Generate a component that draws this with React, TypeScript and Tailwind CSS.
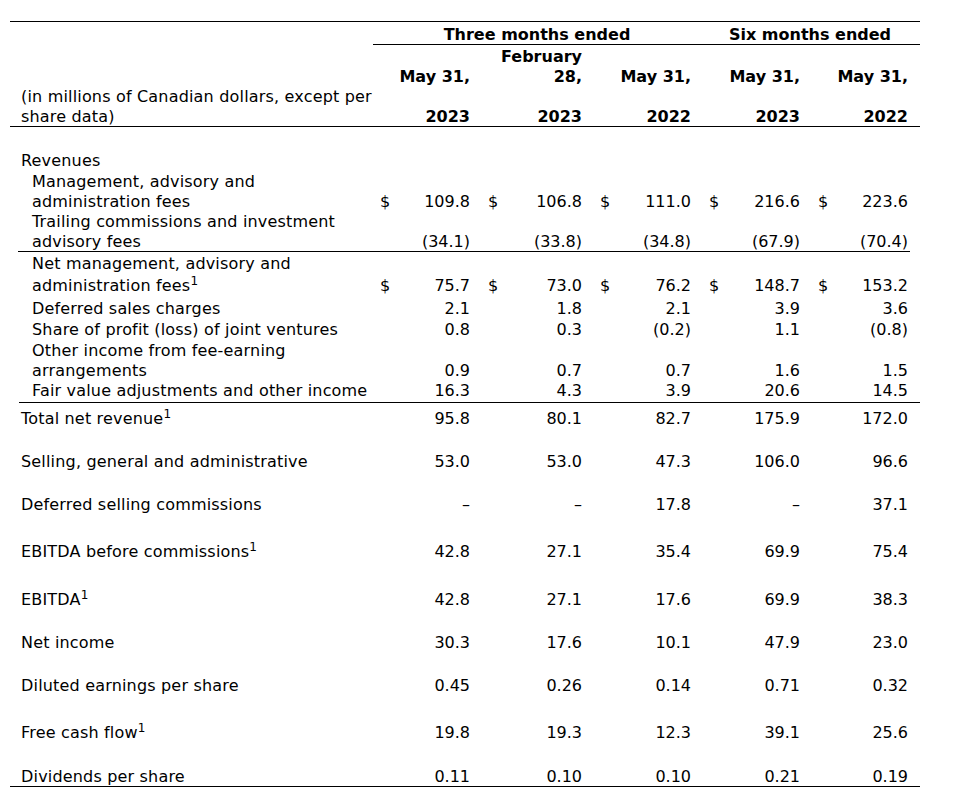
import { Fragment, ReactNode } from "react";

// column template: spacer | label | 5 x ($, value) | spacer
const cols =
  "grid grid-cols-[8px_355px_23px_76px_32px_80px_32px_77px_33px_76px_32px_76px_10px] items-end";

type RowProps = {
  label: ReactNode;
  vals: string[];
  dollar?: boolean;
  sub?: boolean;
  cls: string;
};

const Row = ({ label, vals, dollar, sub, cls }: RowProps) => (
  <div className={`${cols} translate-y-px ${cls}`}>
    <div />
    <div className={sub ? "pl-[14px] tracking-[0.18px]" : "pl-[3px] tracking-[0.18px]"}>{label}</div>
    {vals.map((v, i) => (
      <Fragment key={i}>
        <div className={i === 0 ? "pl-[7px]" : "pl-[16px]"}>{dollar ? "$" : ""}</div>
        <div className="text-right pr-[2px]">{v}</div>
      </Fragment>
    ))}
    <div />
  </div>
);

const Line = ({ cls }: { cls: string }) => <div className={`h-px bg-black ${cls}`} />;

const Sup = () => <sup>1</sup>;

const dash = "\u2013";

export default function App() {
  return (
    <div className="w-[957px] h-[801px] bg-white pt-[21px] pl-[10px] font-['DejaVu_Sans',Verdana,sans-serif] text-[16px] leading-[20px] text-black">
      <div className="w-[910px]">
        <Line cls="" />

        {/* group headers */}
        <div className={`${cols} h-[22px] font-bold translate-y-px`}>
          <div className="col-span-2" />
          <div className="col-span-6 text-center pl-[8px]">Three months ended</div>
          <div className="col-span-5 text-center pl-[7px]">Six months ended</div>
        </div>
        <Line cls="ml-[363px]" />

        {/* period headers */}
        <div className={`${cols} h-[81px] translate-y-px`}>
          <div className="col-span-2 pl-[11px] tracking-[0.18px]">
            (in millions of Canadian dollars, except per
            <br />
            share data)
          </div>
          <div className="col-span-2 text-right pr-[2px] font-bold">
            May 31,
            <br />
            <br />
            2023
          </div>
          <div className="col-span-2 text-right pr-[2px] font-bold">
            February
            <br />
            28,
            <br />
            <br />
            2023
          </div>
          <div className="col-span-2 text-right pr-[2px] font-bold">
            May 31,
            <br />
            <br />
            2022
          </div>
          <div className="col-span-2 text-right pr-[2px] font-bold">
            May 31,
            <br />
            <br />
            2023
          </div>
          <div className="col-span-2 text-right pr-[2px] font-bold">
            May 31,
            <br />
            <br />
            2022
          </div>
          <div />
        </div>
        <Line cls="" />

        <div className="h-[23px]" />
        <Row label="Revenues" vals={["", "", "", "", ""]} cls="h-[20px]" />
        <Row
          sub
          dollar
          label={
            <>
              Management, advisory and
              <br />
              administration fees
            </>
          }
          vals={["109.8", "106.8", "111.0", "216.6", "223.6"]}
          cls="h-[41px]"
        />
        <Row
          sub
          label={
            <>
              Trailing commissions and investment
              <br />
              advisory fees
            </>
          }
          vals={["(34.1)", "(33.8)", "(34.8)", "(67.9)", "(70.4)"]}
          cls="h-[40px]"
        />
        <Line cls="ml-[8px] mr-[10px]" />

        <Row
          sub
          dollar
          label={
            <>
              <div>Net management, advisory and</div>
              <div className="mt-[2px]">
                administration fees
                <Sup />
              </div>
            </>
          }
          vals={["75.7", "73.0", "76.2", "148.7", "153.2"]}
          cls="h-[43px]"
        />
        <Row sub label="Deferred sales charges" vals={["2.1", "1.8", "2.1", "3.9", "3.6"]} cls="h-[23px]" />
        <Row
          sub
          label="Share of profit (loss) of joint ventures"
          vals={["0.8", "0.3", "(0.2)", "1.1", "(0.8)"]}
          cls="h-[21px]"
        />
        <Row
          sub
          label={
            <>
              Other income from fee-earning
              <br />
              arrangements
            </>
          }
          vals={["0.9", "0.7", "0.7", "1.6", "1.5"]}
          cls="h-[41px]"
        />
        <Row
          sub
          label="Fair value adjustments and other income"
          vals={["16.3", "4.3", "3.9", "20.6", "14.5"]}
          cls="h-[22px] pb-[2px]"
        />
        <Line cls="ml-[9px]" />

        <Row
          label={
            <>
              Total net revenue
              <Sup />
            </>
          }
          vals={["95.8", "80.1", "82.7", "175.9", "172.0"]}
          cls="h-[25px]"
        />
        <Row
          label="Selling, general and administrative"
          vals={["53.0", "53.0", "47.3", "106.0", "96.6"]}
          cls="h-[43px]"
        />
        <Row
          label="Deferred selling commissions"
          vals={[dash, dash, "17.8", dash, "37.1"]}
          cls="h-[43px]"
        />
        <Row
          label={
            <>
              EBITDA before commissions
              <Sup />
            </>
          }
          vals={["42.8", "27.1", "35.4", "69.9", "75.4"]}
          cls="h-[47px]"
        />
        <Row
          label={
            <>
              EBITDA
              <Sup />
            </>
          }
          vals={["42.8", "27.1", "17.6", "69.9", "38.3"]}
          cls="h-[48px]"
        />
        <Row label="Net income" vals={["30.3", "17.6", "10.1", "47.9", "23.0"]} cls="h-[43px]" />
        <Row
          label="Diluted earnings per share"
          vals={["0.45", "0.26", "0.14", "0.71", "0.32"]}
          cls="h-[43px]"
        />
        <Row
          label={
            <>
              Free cash flow
              <Sup />
            </>
          }
          vals={["19.8", "19.3", "12.3", "39.1", "25.6"]}
          cls="h-[47px]"
        />
        <Row
          label="Dividends per share"
          vals={["0.11", "0.10", "0.10", "0.21", "0.19"]}
          cls="h-[44px]"
        />
        <Line cls="" />
      </div>
    </div>
  );
}
